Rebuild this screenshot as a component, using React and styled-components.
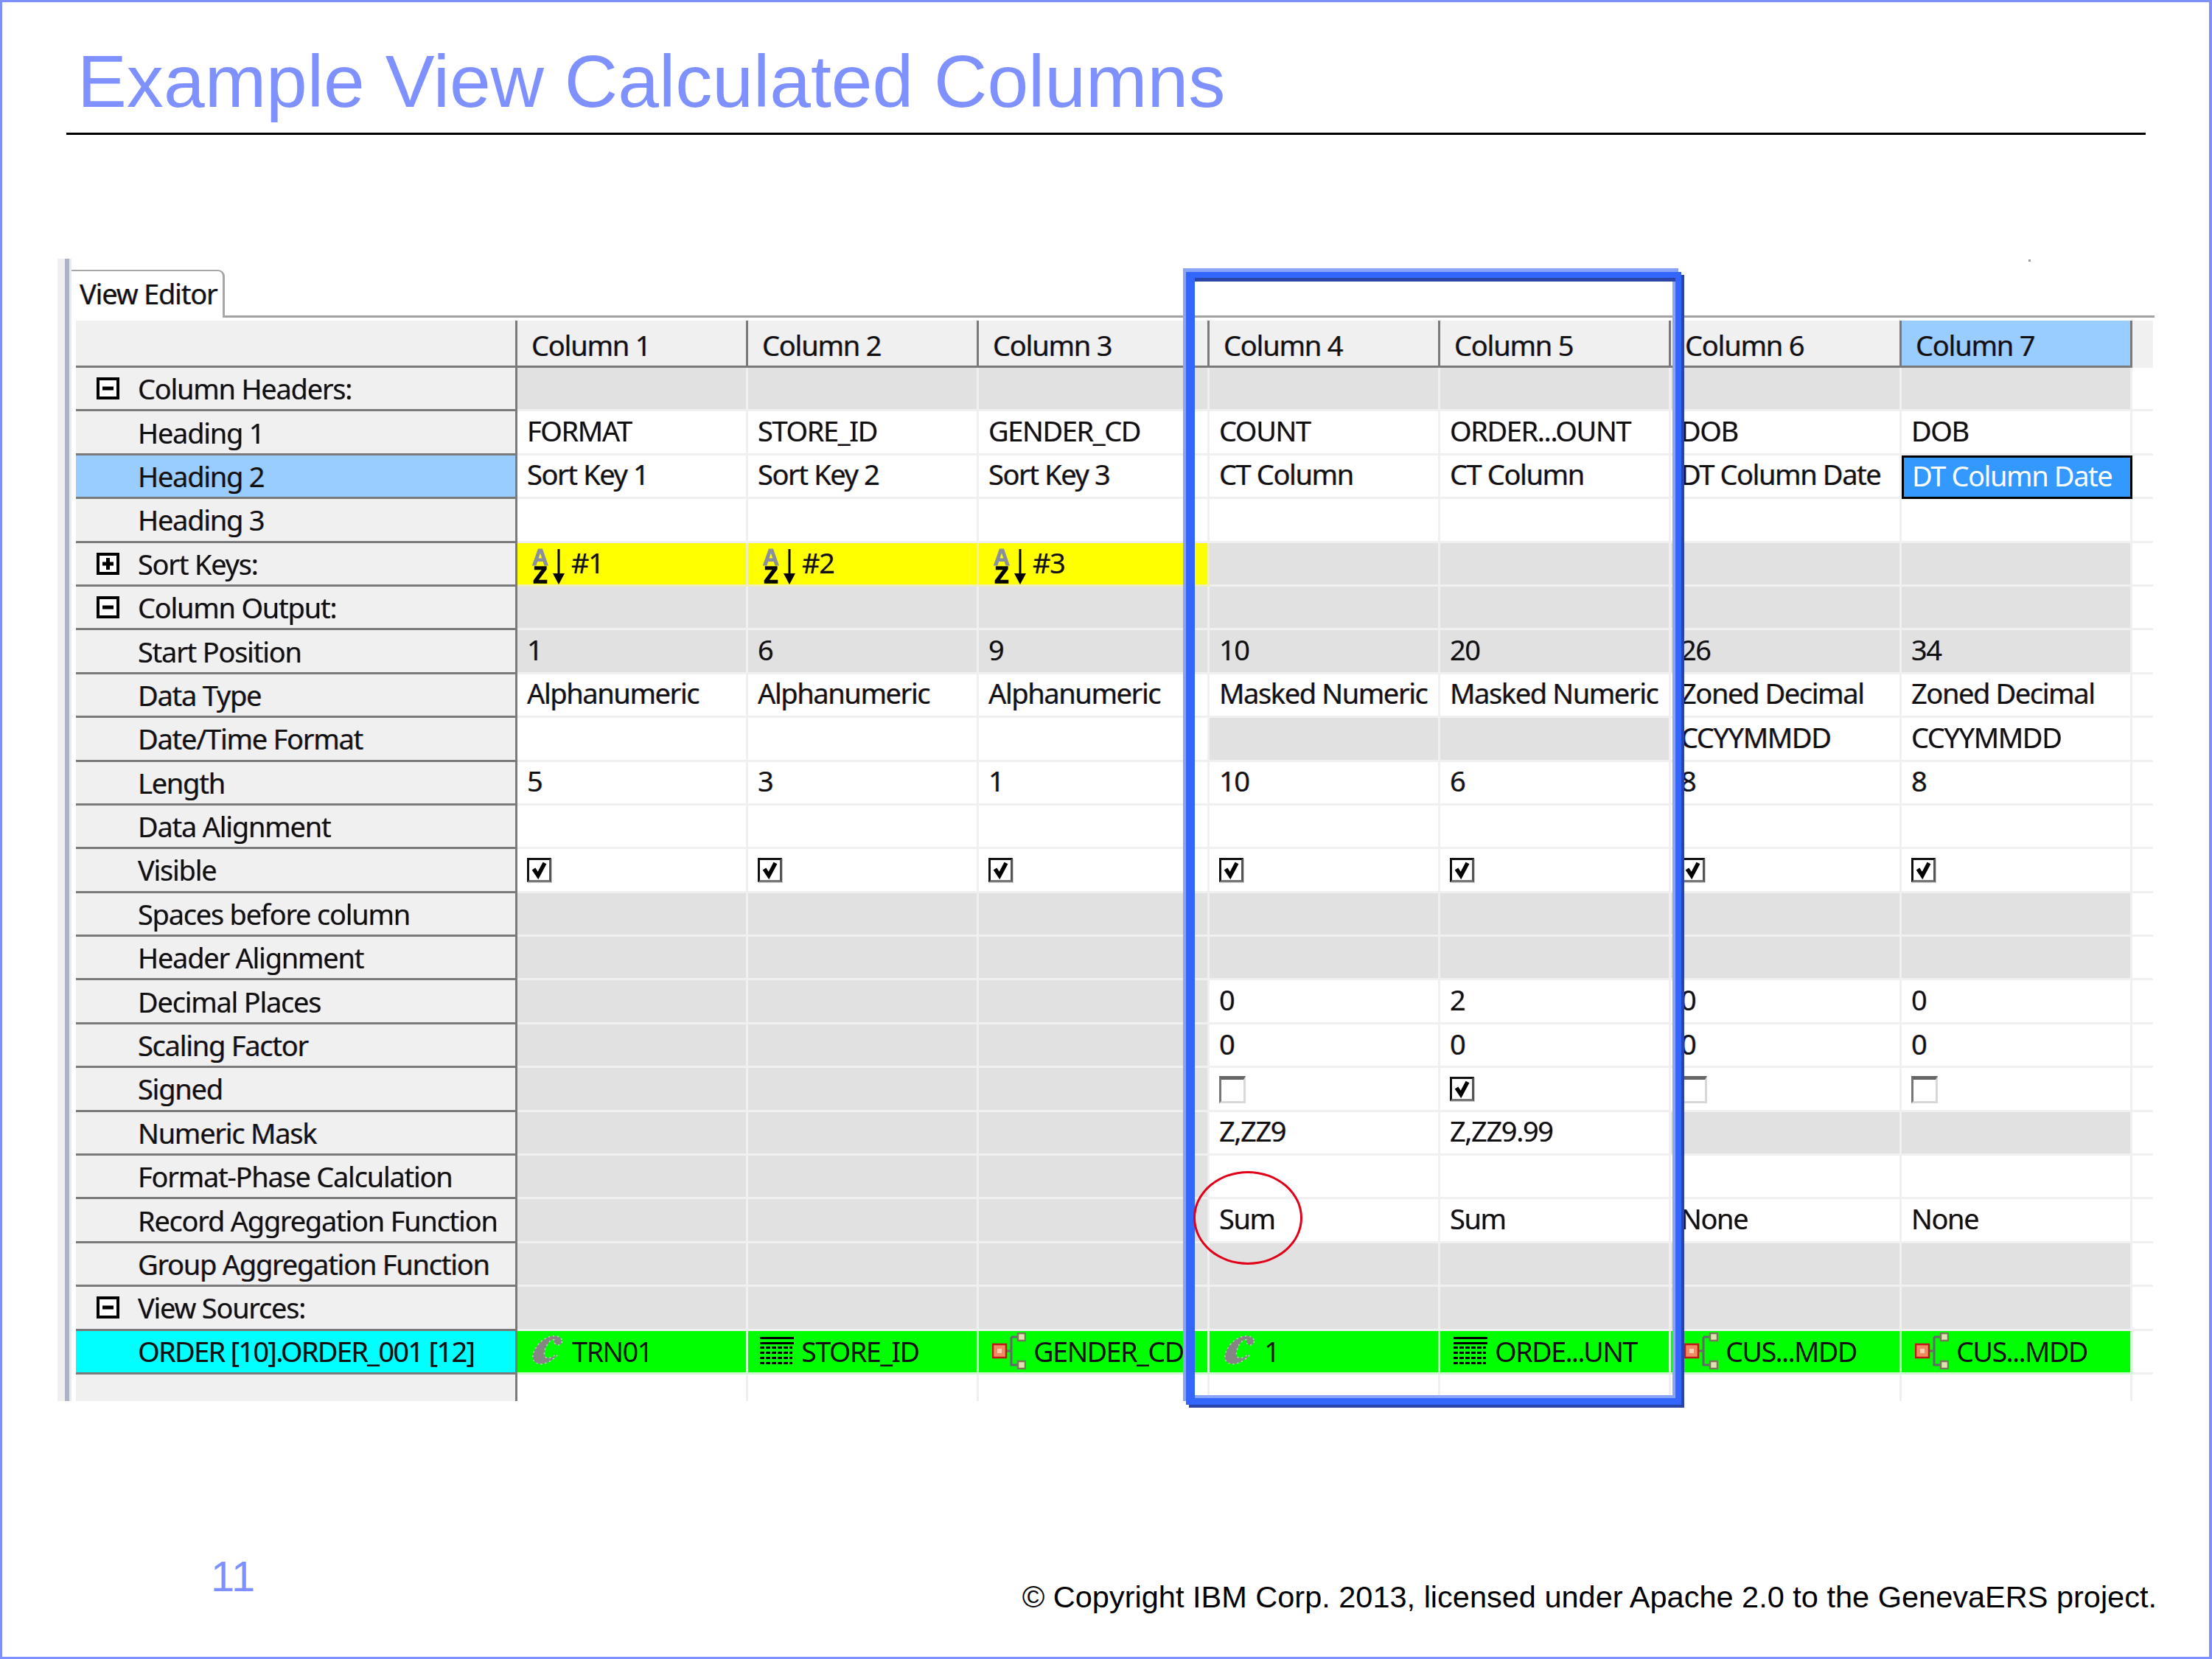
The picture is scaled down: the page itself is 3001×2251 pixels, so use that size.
import React from "react";
import styled, { createGlobalStyle } from "styled-components";

const periwinkle = "#7f91ff";
const G = { gray: true };

const GlobalStyle = createGlobalStyle`
  html, body { margin: 0; padding: 0; background: #fff; }
`;

const Page = styled.div`
  position: relative;
  width: 3001px;
  height: 2251px;
  box-sizing: border-box;
  border: 3px solid ${periwinkle};
  border-right-width: 4px;
  background: #fff;
  overflow: hidden;
  font-family: "Liberation Sans", Arial, sans-serif;
`;

const Title = styled.h1`
  margin: 0 0 0 102px;
  padding-top: 45px;
  height: 132px;
  box-sizing: content-box;
  font-size: 100.2px;
  line-height: 125px;
  font-weight: 400;
  color: ${periwinkle};
  white-space: nowrap;
`;

const Rule = styled.div`
  height: 3px;
  margin: 0 86px 0 87px;
  background: #000;
`;

const Editor = styled.div`
  display: flex;
  margin: 168px 0 0 75px;
  height: 1550px;
`;

const Sash = styled.div`
  width: 19px;
  flex: none;
  background: linear-gradient(to right, #efefef 0 10px, #aab4c4 10px 16px, #e8edf3 16px);
`;

const Main = styled.div`
  display: flex;
  flex-direction: column;
  padding-top: 15px;
  width: 2826px;
  font-family: "Noto Sans", sans-serif;
  font-size: 38px;
  letter-spacing: -1.4px;
  color: #111;
  text-shadow: 0.7px 0 0 rgba(0, 60, 200, 0.35), -0.7px 0 0 rgba(200, 90, 0, 0.35);
  filter: blur(0.55px);
`;

const TabStrip = styled.div`
  height: 62px;
  flex: none;
  display: flex;
  box-sizing: content-box;
  border-bottom: 3px solid #a2a2a2;
`;

const Tab = styled.div`
  width: 208px;
  height: 65px;
  box-sizing: border-box;
  padding-left: 11px;
  background: #fff;
  border-top: 2px solid #a6a6a6;
  border-right: 3px solid #a6a6a6;
  border-top-right-radius: 9px;
  line-height: 60px;
  margin-bottom: -3px;
  letter-spacing: -1.2px;
  white-space: nowrap;
`;

const Table = styled.div`
  display: grid;
  margin: 4px 0 0 6px;
  grid-template-columns: 599px repeat(7, 313px) 28px;
  grid-template-rows: 64px repeat(23, 59.4px) 36px;
`;

const Corner = styled.div`
  background: #f0f0f0;
  border-right: 3px solid #7a7a7a;
  border-bottom: 3px solid #7a7a7a;
`;

const ColumnHead = styled.div`
  display: flex;
  align-items: center;
  box-sizing: border-box;
  padding: 4px 0 0 19px;
  letter-spacing: -1.2px;
  white-space: nowrap;
  background: ${(p) => (p.$active ? "#99ccff" : "#f0f0f0")};
  border-right: 3px solid #7a7a7a;
  border-bottom: 3px solid #7a7a7a;
`;

const HeadFiller = styled.div`
  background: #f0f0f0;
`;

const RowHead = styled.div`
  display: flex;
  align-items: center;
  gap: 25px;
  box-sizing: border-box;
  padding-left: 28px;
  padding-bottom: ${(p) => (p.$source ? "2px" : "0")};
  letter-spacing: ${(p) => (p.$source ? "-1.7px" : "-1.25px")};
  white-space: nowrap;
  background: ${(p) => p.$bg || "#f0f0f0"};
  border-right: 3px solid #7a7a7a;
  border-bottom: ${(p) => (p.$last ? "none" : "3px solid #7a7a7a")};
`;

const ToggleSlot = styled.span`
  width: 31px;
  height: 30px;
  flex: none;
  display: flex;
`;

const Cell = styled.div`
  display: flex;
  align-items: center;
  box-sizing: border-box;
  padding: 0 0 5px 13px;
  white-space: nowrap;
  overflow: hidden;
  background: ${(p) => p.$bg || "#fff"};
  border-right: 3px solid ${(p) => p.$line || "#f0f0f0"};
  border-bottom: 3px solid ${(p) => p.$line || "#f0f0f0"};
`;

const SelectedCell = styled.div`
  display: flex;
  align-items: center;
  box-sizing: border-box;
  padding: 0 0 5px 11px;
  background: #3399ff;
  color: #fff;
  text-shadow: none;
  border: 3px solid #000;
  white-space: nowrap;
`;

const RowFiller = styled.div`
  background: #fff;
  border-bottom: 3px solid #f0f0f0;
`;

const TailCell = styled.div`
  background: #fff;
  border-right: 3px solid #efefef;
`;

const SortCell = styled.div`
  display: flex;
  align-items: center;
  box-sizing: border-box;
  padding-left: 19px;
  gap: 6px;
  white-space: nowrap;
  background: #ffff00;
  border-right: 3px solid #eeeeb8;
  border-bottom: 3px solid #eeeeb8;
`;

const SortLabel = styled.span`
  margin-bottom: 4px;
`;

const SourceCell = styled.div`
  display: flex;
  align-items: center;
  box-sizing: border-box;
  padding: 0 0 2px ${(p) => p.$pad}px;
  gap: 10px;
  letter-spacing: -1.7px;
  white-space: nowrap;
  overflow: hidden;
  text-shadow: none;
  background: #00ff00;
  border-right: 3px solid #d0f8d0;
  border-bottom: 3px solid #d0f8d0;
`;

const SortGlyph = styled.svg`
  flex: none;
  margin-top: 8px;
  overflow: visible;
  text-shadow: none;
`;

const BoxOn = styled.span`
  width: 33px;
  height: 33px;
  box-sizing: border-box;
  margin-top: 6px;
  border: 3px solid #111;
  border-right-color: #555;
  border-bottom-color: #777;
  box-shadow: 1px 1px 0 #ccc;
  display: flex;
  background: #fff;
`;

const BoxOff = styled.span`
  width: 36px;
  height: 37px;
  box-sizing: border-box;
  margin-top: 8px;
  border: 3px solid #d8d8d8;
  border-top: 5px solid #666;
  border-left-color: #777;
  background: #fff;
`;

// overlays drawn on top of the table
const Frame = styled.div`
  position: absolute;
  left: 1606px;
  top: 366px;
  width: 672px;
  height: 1537px;
  box-sizing: border-box;
  border-style: solid;
  border-color: #3366ff;
  border-width: 8px 8px 9px 12px;
  box-shadow: -4px -5px 0 #8aa5f8, 4px 4px 0 #2a44a8, inset 0 5px 0 #2a44a8, inset -4px -4px 0 #8aa5f8;
`;

const Ellipse = styled.div`
  position: absolute;
  left: 1616px;
  top: 1586px;
  width: 148px;
  height: 127px;
  box-sizing: border-box;
  border: 3px solid #e00018;
  border-radius: 50%;
`;

const Speck = styled.div`
  position: absolute;
  left: 2749px;
  top: 349px;
  width: 3px;
  height: 3px;
  background: #999;
`;

const PageNumber = styled.div`
  position: absolute;
  left: 283px;
  top: 2101px;
  font-size: 58px;
  line-height: 70px;
  color: ${periwinkle};
`;

const Copyright = styled.div`
  position: absolute;
  right: 71px;
  top: 2139px;
  font-size: 41.5px;
  line-height: 50px;
  color: #000;
  white-space: nowrap;
`;

const Toggle = ({ plus }) => (
  <svg width="31" height="30" viewBox="0 0 31 30">
    <rect x="2" y="2" width="27" height="26" fill="#fff" stroke="#000" strokeWidth="4" />
    <rect x="8" y="12.5" width="15" height="5" fill="#000" />
    {plus && <rect x="13" y="7" width="5" height="16" fill="#000" />}
  </svg>
);

const Check = () => (
  <svg width="27" height="27" viewBox="0 0 27 27">
    <path d="M6 12 L12 21 L21 4" fill="none" stroke="#000" strokeWidth="5.5" />
  </svg>
);

const SortIcon = () => (
  <SortGlyph width="48" height="50" viewBox="0 0 48 50">
    <text x="12" y="23" textAnchor="middle" fontFamily="Liberation Sans" fontWeight="700" fontSize="31" letterSpacing="0" fill="#8a8fa0" stroke="#8a8fa0" strokeWidth="1">A</text>
    <text x="12" y="47" textAnchor="middle" fontFamily="Liberation Sans" fontWeight="700" fontSize="31" letterSpacing="0" fill="#000" stroke="#000" strokeWidth="1.5">Z</text>
    <path d="M37 1 V38" stroke="#000" strokeWidth="3" />
    <path d="M29 34 H45 L37 49 Z" fill="#000" />
  </SortGlyph>
);

const CalcIcon = () => (
  <svg width="44" height="42" viewBox="0 0 44 42">
    <path
      d="M40 6 C38 0 28 -1 20 3 C8 9 0 22 1 31 C2 38 10 40 17 38 C24 36 30 31 34 27 L32 26 C27 30 22 32 19 30 C15 28 16 20 20 13 C23 8 27 5 30 6 C29 9 31 13 35 13 C39 13 41 10 40 6 Z"
      fill="#858585"
      stroke="#c8d8c8"
      strokeWidth="1.5"
      strokeDasharray="2 4"
    />
  </svg>
);

const FieldIcon = () => (
  <svg width="46" height="38" viewBox="0 0 46 38">
    <rect x="0" y="0" width="46" height="3" fill="#000" />
    <rect x="0" y="7" width="46" height="3" fill="#000" />
    {[13, 20, 27, 34].map((y) => (
      <path key={y} d={`M0 ${y + 1.5} H44`} stroke="#000" strokeWidth="3" strokeDasharray="6 2" />
    ))}
  </svg>
);

const TreeIcon = () => (
  <svg width="46" height="50" viewBox="0 0 46 50">
    <path d="M20 25 H26 M26 6 H36 M26 6 V44 H36" fill="none" stroke="#66666f" strokeWidth="3" />
    <rect x="1" y="16" width="18" height="18" fill="#f08a60" stroke="#c01818" strokeWidth="2.5" />
    <rect x="7" y="22" width="6" height="6" fill="#ffd0b0" />
    <rect x="35" y="1" width="10" height="10" fill="#e0e0b0" stroke="#77775a" strokeWidth="2.5" />
    <rect x="35" y="39" width="10" height="10" fill="#e0e0b0" stroke="#77775a" strokeWidth="2.5" />
  </svg>
);

const sortCell = (n) => ({ sort: n });
const on = { check: true };
const off = { check: false };

const rows = [
  { label: "Column Headers:", toggle: "minus", cells: [G, G, G, G, G, G, G] },
  { label: "Heading 1", cells: ["FORMAT", "STORE_ID", "GENDER_CD", "COUNT", "ORDER...OUNT", "DOB", "DOB"] },
  { label: "Heading 2", bg: "#99ccff", cells: ["Sort Key 1", "Sort Key 2", "Sort Key 3", "CT Column", "CT Column", "DT Column Date", { selected: "DT Column Date" }] },
  { label: "Heading 3", cells: ["", "", "", "", "", "", ""] },
  { label: "Sort Keys:", toggle: "plus", cells: [sortCell(1), sortCell(2), sortCell(3), G, G, G, G] },
  { label: "Column Output:", toggle: "minus", cells: [G, G, G, G, G, G, G] },
  { label: "Start Position", cells: ["1", "6", "9", "10", "20", "26", "34"].map((text) => ({ gray: true, text })) },
  { label: "Data Type", cells: ["Alphanumeric", "Alphanumeric", "Alphanumeric", "Masked Numeric", "Masked Numeric", "Zoned Decimal", "Zoned Decimal"] },
  { label: "Date/Time Format", cells: ["", "", "", G, G, "CCYYMMDD", "CCYYMMDD"] },
  { label: "Length", cells: ["5", "3", "1", "10", "6", "8", "8"] },
  { label: "Data Alignment", cells: ["", "", "", "", "", "", ""] },
  { label: "Visible", cells: [on, on, on, on, on, on, on] },
  { label: "Spaces before column", cells: [G, G, G, G, G, G, G] },
  { label: "Header Alignment", cells: [G, G, G, G, G, G, G] },
  { label: "Decimal Places", cells: [G, G, G, "0", "2", "0", "0"] },
  { label: "Scaling Factor", cells: [G, G, G, "0", "0", "0", "0"] },
  { label: "Signed", cells: [G, G, G, off, on, off, off] },
  { label: "Numeric Mask", cells: [G, G, G, "Z,ZZ9", "Z,ZZ9.99", G, G] },
  { label: "Format-Phase Calculation", cells: [G, G, G, "", "", "", ""] },
  { label: "Record Aggregation Function", cells: [G, G, G, "Sum", "Sum", "None", "None"] },
  { label: "Group Aggregation Function", cells: [G, G, G, G, G, G, G] },
  { label: "View Sources:", toggle: "minus", cells: [G, G, G, G, G, G, G] },
];

const sources = [
  { Icon: CalcIcon, pad: 20, text: "TRN01" },
  { Icon: FieldIcon, pad: 16, text: "STORE_ID" },
  { Icon: TreeIcon, pad: 18, text: "GENDER_CD" },
  { Icon: CalcIcon, pad: 20, text: "1" },
  { Icon: FieldIcon, pad: 18, text: "ORDE...UNT" },
  { Icon: TreeIcon, pad: 18, text: "CUS...MDD" },
  { Icon: TreeIcon, pad: 18, text: "CUS...MDD" },
];

const renderCell = (c, key) => {
  if (typeof c === "string") return <Cell key={key}>{c}</Cell>;
  if (c.selected) return <SelectedCell key={key}>{c.selected}</SelectedCell>;
  if (c.sort) {
    return (
      <SortCell key={key}>
        <SortIcon />
        <SortLabel>#{c.sort}</SortLabel>
      </SortCell>
    );
  }
  if (c.check === true) return <Cell key={key}><BoxOn><Check /></BoxOn></Cell>;
  if (c.check === false) return <Cell key={key}><BoxOff /></Cell>;
  return <Cell key={key} $bg="#e1e1e1">{c.text}</Cell>;
};

export default function App() {
  return (
    <Page>
      <GlobalStyle />
      <Title>Example View Calculated Columns</Title>
      <Rule />
      <Editor>
        <Sash />
        <Main>
          <TabStrip>
            <Tab>View Editor</Tab>
          </TabStrip>
          <Table>
            <Corner />
            {[1, 2, 3, 4, 5, 6, 7].map((n) => (
              <ColumnHead key={n} $active={n === 7}>Column {n}</ColumnHead>
            ))}
            <HeadFiller />
            {rows.map((row) => (
              <React.Fragment key={row.label}>
                <RowHead $bg={row.bg}>
                  <ToggleSlot>{row.toggle && <Toggle plus={row.toggle === "plus"} />}</ToggleSlot>
                  {row.label}
                </RowHead>
                {row.cells.map((c, i) => renderCell(c, i))}
                <RowFiller />
              </React.Fragment>
            ))}
            <RowHead $bg="#00ffff" $source>
              <ToggleSlot />
              ORDER [10].ORDER_001 [12]
            </RowHead>
            {sources.map(({ Icon, pad, text }, i) => (
              <SourceCell key={i} $pad={pad}>
                <Icon />
                <span>{text}</span>
              </SourceCell>
            ))}
            <RowFiller />
            <RowHead $last>
              <ToggleSlot />
            </RowHead>
            {[1, 2, 3, 4, 5, 6, 7].map((n) => <TailCell key={n} />)}
          </Table>
        </Main>
      </Editor>
      <Frame />
      <Ellipse />
      <Speck />
      <PageNumber>11</PageNumber>
      <Copyright>© Copyright IBM Corp. 2013, licensed under Apache 2.0 to the GenevaERS project.</Copyright>
    </Page>
  );
}
